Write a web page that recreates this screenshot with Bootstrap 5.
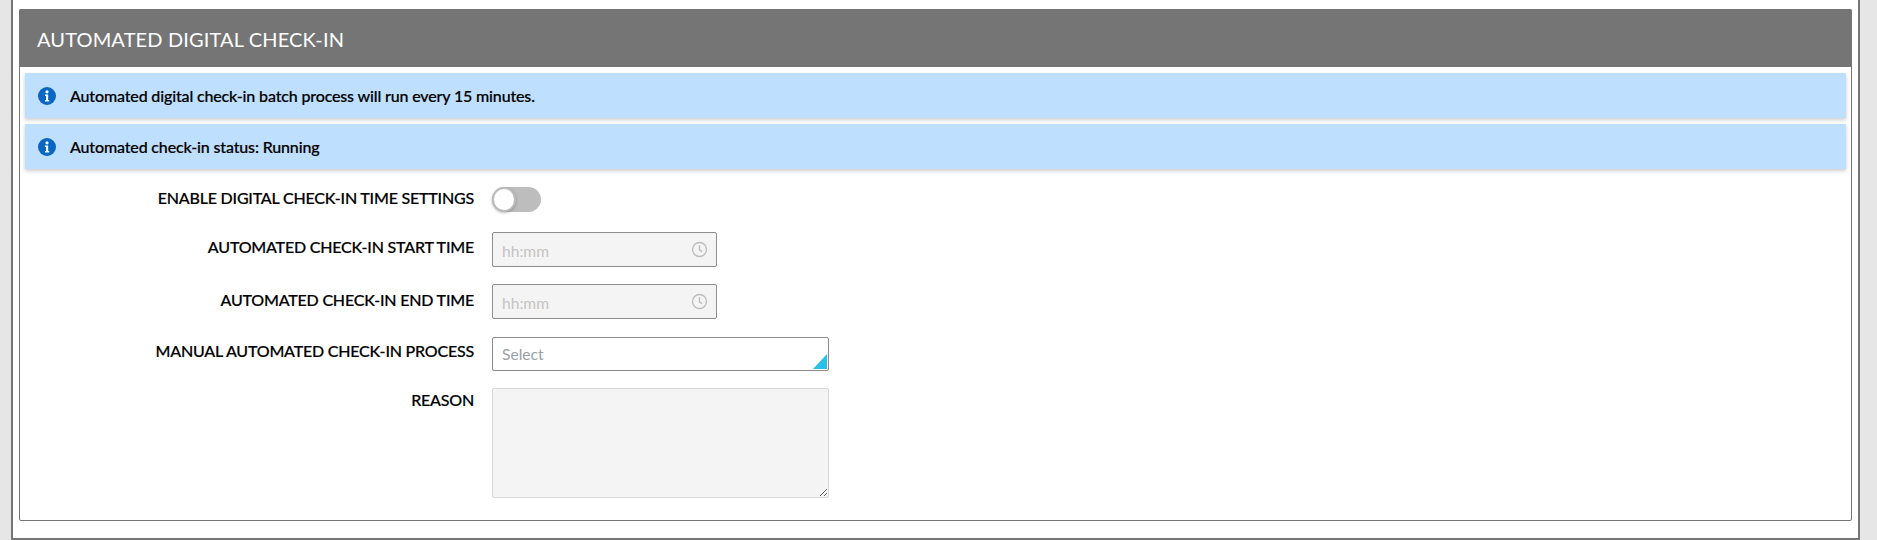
<!DOCTYPE html>
<html lang="en">
<head>
<meta charset="utf-8">
<title>Automated Digital Check-In</title>
<link href="https://cdn.jsdelivr.net/npm/bootstrap@5.3.0/dist/css/bootstrap.min.css" rel="stylesheet">
<style>
html,body{height:100%;overflow:hidden}
body{background:#e6e6e6;font-family:"Lato","Liberation Sans",sans-serif;color:#000}
.shell{margin-left:11px;width:1849px;height:540px;background:#fff;border:2px solid #757575;border-top:0;padding:9px 6px 0 6px}
.panel{height:512px;border:1px solid #757575;border-radius:2px}
.panel-head{height:58px;margin:-1px -1px 0;background:#757575;color:#fff;font-size:20px;letter-spacing:.14px;line-height:60px;padding-left:18px;border-radius:2px 2px 0 0}
.note{height:45px;margin:6px 5px 0 5px;background:#bfdfff;box-shadow:0 2px 4px rgba(0,0,0,.2);padding-left:13px;font-size:16px;letter-spacing:-.15px;font-weight:500;gap:14px;-webkit-text-stroke:.2px #000}
.note + .note{margin-top:6px}
.note svg{flex:none}
.form-area{padding:18px 0 0}
.frow{gap:18px}
.flabel{width:454px;text-align:right;font-size:16px;letter-spacing:-.2px;line-height:20px;font-weight:500;-webkit-text-stroke:.2px #000;text-transform:uppercase}
.r1{height:25px;margin-bottom:20px}.r1 .flabel{padding-top:1px}
.r2{height:35px;margin-bottom:17px}.r2 .flabel{padding-top:5px}
.r2b{margin-bottom:18px}.r2b .flabel{padding-top:6px}
.r3{height:34px;margin-bottom:17px}.r3 .flabel{padding-top:4px}
.r4{height:110px}.r4 .flabel{padding-top:2px}
.sw{display:block;position:relative;width:49px;height:25px;margin:0;background:#bdbdbd;border-radius:13px}
.sw-knob{position:absolute;left:0;top:0;width:24px;height:25px;background:#fff;border:2px solid #bdbdbd;border-radius:50%;box-shadow:0 1px 3px rgba(0,0,0,.25)}
.time-wrap{position:relative;width:225px}
.time-wrap .form-control{height:35px;background:#f4f4f4;border:1px solid #8c8c8c;border-radius:2px;padding:2px 9px 0;font-size:15.6px;font-family:inherit}
.r2b .form-control{padding-top:3px}
.time-wrap .form-control::placeholder{color:#c4c4c4;opacity:1}
.time-wrap svg{position:absolute;right:9px;top:9px}
.sel-wrap{position:relative;width:337px}
.sel-wrap .form-select{height:34px;background-image:none;border:1px solid #8c8c8c;border-radius:2px;padding:2px 9px 0;font-size:15.6px;font-family:inherit;color:#9b9ea8}
.sel-wrap::after{content:"";position:absolute;right:2px;bottom:2px;border-style:solid;border-width:0 0 15px 14px;border-color:transparent transparent #29c0e8 transparent}
.reason-box{display:block;width:337px;height:110px;background:#f4f4f4!important;border:1px solid #d9d9d9;border-radius:2px;font-family:inherit}
</style>
</head>
<body>
<div class="shell">
  <div class="panel card">
    <div class="panel-head">AUTOMATED DIGITAL CHECK-IN</div>
    <div class="note d-flex align-items-center">
      <svg width="18" height="18" viewBox="0 0 17 17"><circle cx="8.5" cy="8.5" r="8.5" fill="#0a66c2"/><circle cx="8.5" cy="4.6" r="1.5" fill="#fff"/><path d="M6.6 7.2h3v5h1v1.4H6.6v-1.4h1v-3.6h-1z" fill="#fff"/></svg>
      <span>Automated digital check-in batch process will run every 15 minutes.</span>
    </div>
    <div class="note d-flex align-items-center">
      <svg width="18" height="18" viewBox="0 0 17 17"><circle cx="8.5" cy="8.5" r="8.5" fill="#0a66c2"/><circle cx="8.5" cy="4.6" r="1.5" fill="#fff"/><path d="M6.6 7.2h3v5h1v1.4H6.6v-1.4h1v-3.6h-1z" fill="#fff"/></svg>
      <span>Automated check-in status: Running</span>
    </div>
    <form class="form-area">
      <div class="frow r1 d-flex align-items-start">
        <div class="flabel">Enable digital check-in time settings</div>
        <label class="sw"><input class="visually-hidden" type="checkbox" aria-label="Enable digital check-in time settings"><span class="sw-knob"></span></label>
      </div>
      <div class="frow r2 d-flex align-items-start">
        <div class="flabel">Automated check-in start time</div>
        <div class="time-wrap">
          <input class="form-control" type="text" placeholder="hh:mm" disabled>
          <svg width="17" height="17" viewBox="0 0 17 17" fill="none" stroke="#bdbdbd" stroke-width="1.4"><circle cx="8.5" cy="8.5" r="7"/><path d="M8.5 4.2v4.6l2.6 1.8"/></svg>
        </div>
      </div>
      <div class="frow r2 r2b d-flex align-items-start">
        <div class="flabel">Automated check-in end time</div>
        <div class="time-wrap">
          <input class="form-control" type="text" placeholder="hh:mm" disabled>
          <svg width="17" height="17" viewBox="0 0 17 17" fill="none" stroke="#bdbdbd" stroke-width="1.4"><circle cx="8.5" cy="8.5" r="7"/><path d="M8.5 4.2v4.6l2.6 1.8"/></svg>
        </div>
      </div>
      <div class="frow r3 d-flex align-items-start">
        <div class="flabel">Manual automated check-in process</div>
        <div class="sel-wrap">
          <select class="form-select"><option>Select</option></select>
        </div>
      </div>
      <div class="frow r4 d-flex align-items-start">
        <div class="flabel">Reason</div>
        <textarea class="reason-box form-control" disabled></textarea>
      </div>
    </form>
  </div>
</div>
<script src="https://cdn.jsdelivr.net/npm/bootstrap@5.3.0/dist/js/bootstrap.bundle.min.js"></script>
</body>
</html>
